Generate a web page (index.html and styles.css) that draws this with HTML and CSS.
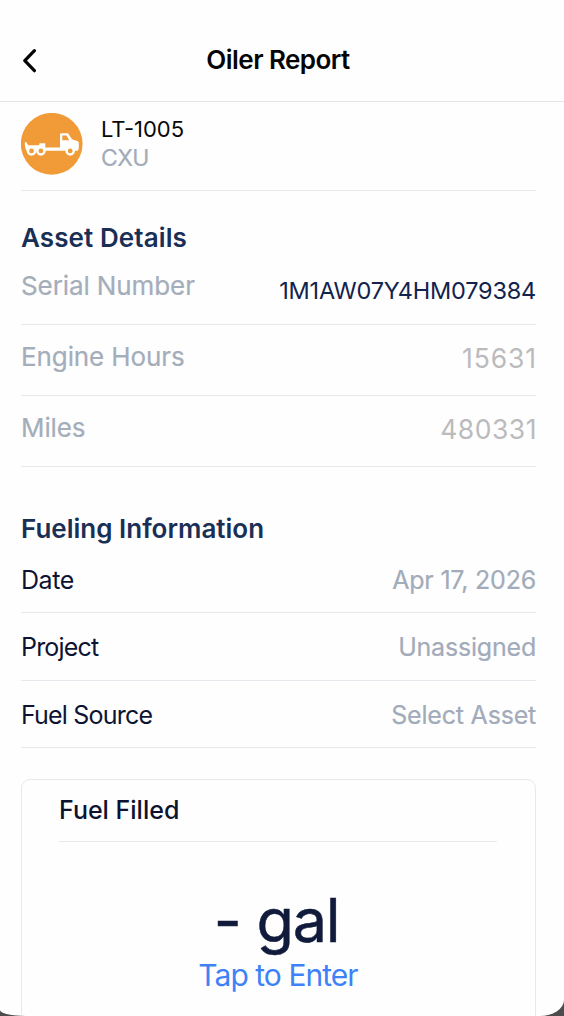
FILE: index.html
```html
<!DOCTYPE html>
<html lang="en">
<head>
<meta charset="utf-8">
<title>Oiler Report</title>
<link rel="stylesheet" href="styles.css">
</head>
<body>
<div class="screen">
  <header class="header">
    <svg class="back" viewBox="0 0 16 24" aria-label="Back"><path d="M13.400 1.700 3.800 11.700l9.600 10"/></svg>
    <h1 class="title"><span>Oiler Report</span></h1>
  </header>
  <main class="content">
    <section class="asset">
      <svg class="avatar" viewBox="21 113 62 62">
        <circle class="disc" cx="51.700" cy="143.800" r="30.900"/>
        <path class="truck" fill-rule="evenodd" d="M24.800 142.300h1.700l1.600 2.900h11l.5-2h5.700v4.300h14.700v-13q0-1.200 1.200-1.200h6.800l4 6 5.800 2q1 .5 1 1.500v5.200l-.8 2.800H46l-15 0h-4.500q-1.700-2.500-1.700-8.500zM62.300 135.600v4.700h6.900l-2.700-4.700z"/>
        <g class="wheels"><circle cx="31.500" cy="150.900" r="3.600"/><circle cx="40.900" cy="150.900" r="3.600"/><circle cx="70.200" cy="150.900" r="3.600"/></g>
      </svg>
      <div class="asset-text">
        <div class="asset-id"><span>LT-1005</span></div>
        <div class="asset-model"><span>CXU</span></div>
      </div>
    </section>
    <section class="details">
      <h2 class="heading details-heading"><span>Asset Details</span></h2>
      <div class="row serial"><span class="label">Serial Number</span><span class="serial-value">1M1AW07Y4HM079384</span></div>
      <div class="row reading"><span class="label">Engine Hours</span><span class="number hours">15631</span></div>
      <div class="row reading"><span class="label miles">Miles</span><span class="number">480331</span></div>
    </section>
    <section class="fueling">
      <h2 class="heading fueling-heading"><span>Fueling Information</span></h2>
      <div class="row field date"><span class="name date-name">Date</span><span class="value date-value">Apr 17, 2026</span></div>
      <div class="row field"><span class="name">Project</span><span class="value">Unassigned</span></div>
      <div class="row field source"><span class="name">Fuel Source</span><span class="value">Select Asset</span></div>
    </section>
    <section class="card">
      <h3 class="card-title"><span>Fuel Filled</span></h3>
      <div class="amount"><span>- gal</span></div>
      <div class="enter"><span>Tap to Enter</span></div>
    </section>
  </main>
</div>
</body>
</html>
```
FILE: styles.css
```css
* { box-sizing: border-box; }
html, body { margin: 0; height: 100%; overflow: hidden; }
body { background: #4b4c4e; font-family: Inter, "Liberation Sans", sans-serif; line-height: 30px; }
h1, h2, h3 { margin: 0; }
.screen { height: 1016px; overflow: hidden; background: #fefefe; border-radius: 0 0 24px 26px / 0 0 16px 6px; }
.header { display: grid; grid-template-columns: 60px 1fr 60px; height: 102px; padding-top: 45px; border-bottom: 1px solid #e5e5e6; }
.back { width: 16px; height: 24px; margin: 4px 0 0 21px; fill: none; stroke: #050505; stroke-width: 3.200; stroke-linecap: round; stroke-linejoin: round; }
.title { text-align: center; margin-right: 8px; font-size: 26px; font-weight: 600; letter-spacing: -.55px; color: #050505; white-space: nowrap; }
.content { padding: 0 28px 0 21px; }
.asset { display: flex; gap: 18px; height: 89px; padding-top: 11px; border-bottom: 1px solid #e8e8ee; }
.avatar { width: 62px; height: 62px; }
.disc { fill: #f09b38; }
.truck { fill: #fff; }
.wheels { fill: #f09b38; stroke: #fff; stroke-width: 2.400; }
.asset-text { padding-top: 1px; }
.asset-id { height: 29px; font-size: 22px; color: #080808; }
.asset-model { font-size: 23px; letter-spacing: -.5px; color: #a2abb9; -webkit-text-stroke: .2px; }
.heading { font-size: 26px; font-weight: 600; color: #1a2f56; }
.details-heading { height: 62px; padding-top: 32px; letter-spacing: .1px; }
.row { display: flex; justify-content: space-between; border-bottom: 1px solid #e8e8ee; white-space: nowrap; }
.label { font-size: 26px; letter-spacing: -.1px; color: #a4adba; -webkit-text-stroke: .2px; }
.serial { height: 72px; padding-top: 18px; }
.serial-value { margin-top: 5px; font-size: 23.500px; letter-spacing: -.22px; color: #12234d; }
.reading { height: 71px; padding-top: 17px; }
.number { margin: 1px -1px 0 0; font-size: 26.500px; letter-spacing: .5px; color: #bbbbbd; }
.hours { letter-spacing: .9px; }
.fueling-heading { height: 77px; padding-top: 47px; }
.field { height: 68px; padding-top: 19px; font-size: 25px; }
.date { height: 69px; padding-top: 21px; }
.source { height: 67px; }
.name { letter-spacing: -.8px; color: #0d1433; }
.date-name { letter-spacing: -.45px; }
.value { letter-spacing: -.2px; color: #a2abb9; -webkit-text-stroke: .2px; }
.card { height: 260px; margin-top: 31px; padding: 15px 38px 0 37px; border: 1px solid #e8e8ee; border-radius: 9px; }
.card-title { height: 47px; border-bottom: 1px solid #e8e8ee; font-size: 25px; font-weight: 500; color: #0c1230; }
.amount { margin: 48px 3px 0 0; text-align: center; font-size: 61px; line-height: 60px; letter-spacing: -1.200px; color: #101a3b; -webkit-text-stroke: .5px; }
.enter { margin-top: 10px; text-align: center; font-size: 30px; letter-spacing: -.95px; color: #3e82f7; }
```
